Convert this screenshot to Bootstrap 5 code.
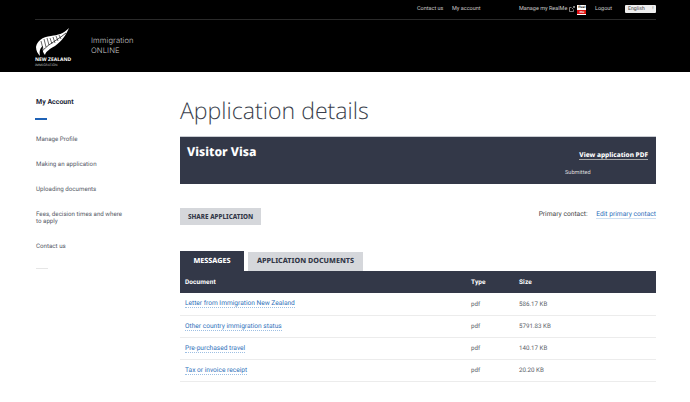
<!DOCTYPE html>
<html lang="en"><head><meta charset="utf-8"><title>Application details</title>
<link href="https://cdn.jsdelivr.net/npm/bootstrap@5.3.0/dist/css/bootstrap.min.css" rel="stylesheet">
<style>
html,body{height:402px;overflow:hidden}
body{font-family:Roboto,"Noto Sans",sans-serif;color:#333846;background:#fff;font-size:6.5px;text-rendering:geometricPrecision}
a{text-decoration:none}
.site-head{background:#000;height:72px;padding:0 34px 0 35px;color:#ddd}
.util-bar{height:20px;border-bottom:1px solid #2a2a2a;font-size:5.5px;padding-top:5px}
.util-bar a{color:#c9c9c9}
.util-contact{margin-left:382px;width:35px}
.util-acct{width:67px}
.util-real{width:76px;display:flex;align-items:flex-start}
.util-real svg{margin:1px 0 0 2px}
.util-logout{width:30px}
.realme-mark{width:9px;height:10px;background:#fff;display:block;margin-left:2px;position:relative;color:#000;font:700 3.4px/4px "Liberation Sans",sans-serif;text-align:center;overflow:hidden}
.realme-sub{position:absolute;left:0;right:0;bottom:1px;height:4px;background:#d11;color:#fff}
.lang-box{width:31px;height:8px;background:#eee;border-radius:1px;color:#444;font-size:5.2px;line-height:8px;padding:0 2px 0 3px}
.lang-arrows{font-size:4.5px;color:#333}
.brand-row{height:52px}
.brand-mark{width:38px;height:44px;flex:none;color:#fff}
.brand-mark svg{display:block}
.brand-nz{font:700 5px/6px "Noto Sans",sans-serif;color:#fff;white-space:nowrap}
.brand-imm{font:400 3.3px/4px "Noto Sans",sans-serif;color:#bbb;white-space:nowrap}
.brand-name{margin-left:18px;font-family:Inter,sans-serif;font-size:7.6px;line-height:10.5px;color:#c8c8c8;font-weight:300;letter-spacing:.1px}
.page-wrap{padding-left:36px;padding-right:34px}
.side-col{width:144px;flex:none;padding-top:25px}
.side-title{font-size:7px;font-weight:700;color:#23283a;line-height:10px}
.side-rule{width:12px;height:1.5px;background:#1f62b6;margin:11px 0 16px -1px}
.side-rule-end{width:12px;height:1px;background:#e6e6e6;margin-top:17px}
.side-link{display:block;color:#575b68;font-size:6.2px;line-height:7.5px;width:90px;margin-bottom:17.5px}
.side-link:last-of-type{margin-bottom:0}
.main-col{width:476px;flex:none}
.page-title{font-family:"Open Sans",sans-serif;font-weight:300;font-size:23.1px;line-height:34px;color:#3b3f4d;margin:21px 0 9px}
.visa-banner{background:#333848;height:48px;color:#fff;padding:8px 7px;border-top:1px solid #c9ccd2}
.visa-name{font-family:"Noto Sans",sans-serif;font-weight:800;font-size:12.2px;line-height:14px;margin:0}
.visa-side{width:83px;margin-top:5px;margin-right:1px;text-align:right}
.visa-pdf{font-weight:800;font-size:6.5px;font-family:"Noto Sans",sans-serif;color:#fff;border-bottom:1px solid #aaa;line-height:9px;display:inline-block}
.visa-state{font-size:5.6px;margin-top:8px;text-align:left;color:#ddd}
.share-row{margin-top:24px;height:17px}
.share-btn{background:#d5d7db;color:#333848;font-family:"Noto Sans",sans-serif;font-weight:800;font-size:6.3px;border-radius:0;border:0;height:17px;line-height:17px;padding:0 8px}
.contact-line{font-size:6.7px;color:#444;margin-top:-5px}
.contact-line a{color:#2e6fba;border-bottom:1px solid #cfe0f2;margin-left:7px}
.tab-row{margin-top:26px;gap:4px}
.tab-on{background:#333848;color:#fff;font-family:"Noto Sans",sans-serif;font-weight:800;font-size:7.2px;height:20px;line-height:20px;width:64px;text-align:center}
.tab-off{background:#d5d7db;color:#333848;font-family:"Noto Sans",sans-serif;font-weight:800;font-size:7.2px;height:19px;line-height:19px;width:115px;text-align:center}
.doc-table{margin:0;width:476px;table-layout:fixed;border-collapse:collapse}
.doc-table th{background:#333848;color:#fff;font-size:6.5px;font-weight:700;height:22px;padding:1px 5px 0;border:0;vertical-align:middle;letter-spacing:.1px}
.doc-table td{height:22px;padding:1px 5px 0;font-size:6.2px;color:#5b5e69;border-bottom:1px solid #ececec;vertical-align:middle}
.doc-table td a{color:#2e6fba;border-bottom:1px dotted #9dbfe3;font-size:6.6px}
.cell-doc{width:286px}.cell-type{width:48px}
</style></head>
<body>
<header class="site-head">
  <div class="util-bar d-flex align-items-start">
    <a class="util-contact" href="#">Contact us</a><a class="util-acct" href="#">My account</a>
    <a class="util-real text-nowrap" href="#">Manage my RealMe<svg width="6" height="6" viewBox="0 0 6 6" fill="none" stroke="#ccc" stroke-width=".6" aria-hidden="true"><path d="M4.5 3.5V5.5H.5V1.5H2.5M3 3 5.5.5M4 .5H5.5V2"/></svg><span class="realme-mark">Real<span class="realme-sub">me</span></span></a>
    <a class="util-logout" href="#">Logout</a>
    <div class="lang-box d-flex justify-content-between"><span>English</span><span class="lang-arrows">↕</span></div>
  </div>
  <div class="brand-row d-flex align-items-center">
    <div class="brand-mark">
      <svg width="38" height="33" viewBox="0 0 38 33" aria-hidden="true"><path d="M34 4C28 10 23 11 16 12 7 13 2 17 1 23 1 27 3 30 5 32 4 27 5 24 8 22 7 26 8 29 10 31 11 27 15 25 20 22 27 17 31 11 34 4Z" fill="#fff"/><path d="M6 29C11 21 20 18 31 9" stroke="#000" stroke-width=".7" fill="none"/><path d="M6 17 8 25M9 15 11 23M12 14 14 21M15 14 17 20M18 13 20 19M21 12 23 17M24 11 26 15" stroke="#000" stroke-width=".6"/></svg>
      <div class="brand-nz">NEW ZEALAND</div><div class="brand-imm">IMMIGRATION</div>
    </div>
    <div class="brand-name">Immigration<br>ONLINE</div>
  </div>
</header>
<div class="page-wrap d-flex">
  <nav class="side-col">
    <div class="side-title">My Account</div>
    <div class="side-rule"></div>
    <a class="side-link" href="#">Manage Profile</a>
    <a class="side-link" href="#">Making an application</a>
    <a class="side-link" href="#">Uploading documents</a>
    <a class="side-link" href="#">Fees, decision times and where to apply</a>
    <a class="side-link" href="#">Contact us</a>
    <div class="side-rule-end"></div>
  </nav>
  <main class="main-col">
    <h1 class="page-title">Application details</h1>
    <section class="visa-banner d-flex justify-content-between">
      <h2 class="visa-name">Visitor Visa</h2>
      <div class="visa-side"><a class="visa-pdf text-nowrap" href="#">View application PDF</a><div class="visa-state">Submitted</div></div>
    </section>
    <div class="share-row d-flex justify-content-between align-items-center">
      <button class="btn share-btn" type="button">SHARE APPLICATION</button>
      <div class="contact-line">Primary contact: <a href="#">Edit primary contact</a></div>
    </div>
    <div class="tab-row d-flex align-items-end">
      <div class="tab-on">MESSAGES</div><div class="tab-off">APPLICATION DOCUMENTS</div>
    </div>
    <table class="table doc-table">
      <thead><tr><th class="cell-doc">Document</th><th class="cell-type">Type</th><th>Size</th></tr></thead>
      <tbody>
        <tr><td><a href="#">Letter from Immigration New Zealand</a></td><td>pdf</td><td>586.17 KB</td></tr>
        <tr><td><a href="#">Other country immigration status</a></td><td>pdf</td><td>5791.83 KB</td></tr>
        <tr><td><a href="#">Pre-purchased travel</a></td><td>pdf</td><td>140.17 KB</td></tr>
        <tr><td><a href="#">Tax or invoice receipt</a></td><td>pdf</td><td>20.20 KB</td></tr>
      </tbody>
    </table>
  </main>
</div>
<script src="https://cdn.jsdelivr.net/npm/bootstrap@5.3.0/dist/js/bootstrap.bundle.min.js"></script>
</body></html>
